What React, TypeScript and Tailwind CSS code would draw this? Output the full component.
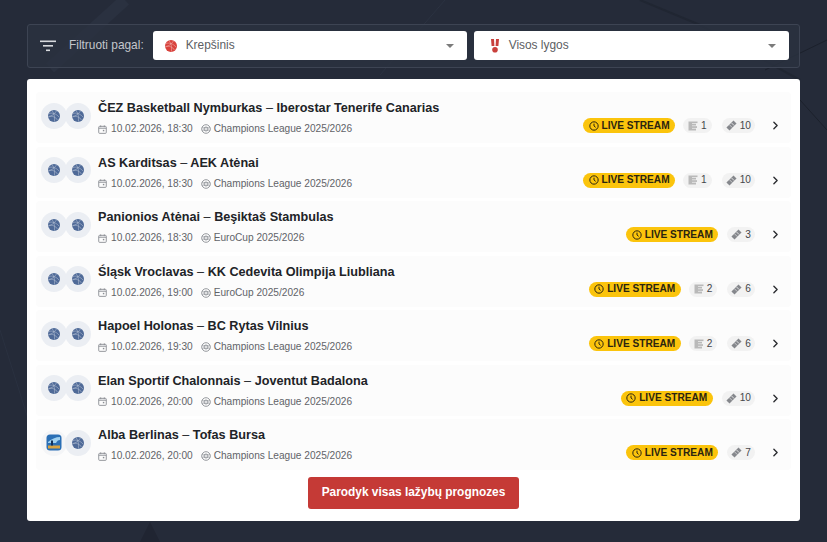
import React from "react";
import { ChevronRight } from "lucide-react";

interface Match {
  home: string;
  away: string;
  time: string;
  league: string;
  tips?: number;
  odds: number;
  alba?: boolean;
}

const matches: Match[] = [
  { home: "ČEZ Basketball Nymburkas", away: "Iberostar Tenerife Canarias", time: "10.02.2026, 18:30", league: "Champions League 2025/2026", tips: 1, odds: 10 },
  { home: "AS Karditsas", away: "AEK Atėnai", time: "10.02.2026, 18:30", league: "Champions League 2025/2026", tips: 1, odds: 10 },
  { home: "Panionios Atėnai", away: "Beşiktaš Stambulas", time: "10.02.2026, 18:30", league: "EuroCup 2025/2026", odds: 3 },
  { home: "Śląsk Vroclavas", away: "KK Cedevita Olimpija Liubliana", time: "10.02.2026, 19:00", league: "EuroCup 2025/2026", tips: 2, odds: 6 },
  { home: "Hapoel Holonas", away: "BC Rytas Vilnius", time: "10.02.2026, 19:30", league: "Champions League 2025/2026", tips: 2, odds: 6 },
  { home: "Elan Sportif Chalonnais", away: "Joventut Badalona", time: "10.02.2026, 20:00", league: "Champions League 2025/2026", odds: 10 },
  { home: "Alba Berlinas", away: "Tofas Bursa", time: "10.02.2026, 20:00", league: "Champions League 2025/2026", odds: 7, alba: true },
];

const Ball = ({ size, color }: { size: number; color: string }) => (
  <svg width={size} height={size} viewBox="0 0 24 24" fill={color}>
    <circle cx="12" cy="12" r="12" />
    <g fill="none" stroke="#fff" strokeWidth="1.2" opacity="0.55">
      <path d="M2 7c6-2 14 0 20 7" />
      <path d="M1 13c7-2 14 1 19 8" />
      <path d="M8 1c4 5 6 12 5 22" />
      <path d="M17 2c-3 5-9 10-16 12" />
    </g>
  </svg>
);

const TeamLogo = ({ alba, overlap }: { alba?: boolean; overlap?: boolean }) => (
  <div className={`w-[26px] h-[26px] rounded-full flex items-center justify-center ${alba ? "bg-[#f4f5f7]" : "bg-[#ebeef3]"} ${overlap ? "-ml-[2px]" : ""}`}>
    {alba ? (
      <svg width="16" height="17" viewBox="0 0 16 17">
        <rect x="0.5" y="0.5" width="15" height="16" rx="3.5" fill="#2a6fb5" />
        <path d="M2 8c3-3 8-5 12-5v3c-2 0-3 1-4 3H2z" fill="#9fd0ef" />
        <rect x="2" y="11.5" width="12" height="3" fill="#d9a441" />
        <rect x="5" y="6.5" width="2" height="5" fill="#12325c" />
      </svg>
    ) : (
      <Ball size={12} color="#4f6a98" />
    )}
  </div>
);

const CalendarIcon = () => (
  <svg width="9" height="9" viewBox="0 0 10 10" fill="none" stroke="#8a8d93" strokeWidth="1">
    <rect x="0.8" y="1.5" width="8.4" height="7.8" rx="1" />
    <path d="M0.8 3.6h8.4M3 .4v2M7 .4v2" />
    <rect x="5.4" y="5.4" width="1.6" height="1.6" fill="#8a8d93" stroke="none" />
  </svg>
);

const LeagueIcon = () => (
  <svg width="10" height="10" viewBox="0 0 10 10" fill="none" stroke="#8a8d93" strokeWidth="0.9">
    <circle cx="5" cy="5" r="4.3" />
    <circle cx="5" cy="5" r="2" />
    <path d="M1 3.5c2 .6 6 .6 8 0M1 6.5c2-.6 6-.6 8 0" strokeWidth="0.6" />
  </svg>
);

const TipsIcon = () => (
  <svg width="10" height="10" viewBox="0 0 10 10" fill="#b9b9b9">
    <rect x="0.5" y="0.5" width="3.5" height="9" />
    <rect x="4" y="0.5" width="5.5" height="1.6" />
    <rect x="4" y="2.8" width="4" height="1.7" />
    <rect x="4" y="5.2" width="5" height="1.7" />
    <rect x="4" y="7.6" width="4" height="1.9" />
  </svg>
);

const TicketIcon = () => (
  <svg width="11" height="11" viewBox="0 0 12 12">
    <path d="M8.2 0.5 11.5 3.8 3.8 11.5 0.5 8.2z" fill="#85878c" />
    <path d="M6 3.2 8.8 6" stroke="#fff" strokeWidth="0.8" />
    <path d="M3.8 5.2 6.8 8.2" stroke="#fff" strokeWidth="0.6" />
  </svg>
);

const ClockIcon = () => (
  <svg width="10" height="10" viewBox="0 0 12 12" fill="none" stroke="#2b2410" strokeWidth="1.2">
    <circle cx="6" cy="6" r="5" />
    <path d="M6 3.2V6l2 1.6" />
  </svg>
);

const Caret = () => <span className="w-0 h-0 border-l-[4.5px] border-r-[4.5px] border-t-[4px] border-l-transparent border-r-transparent border-t-[#7b7b7b]" />;

const MatchRow = ({ match }: { match: Match }) => (
  <div className="h-[51px] flex items-center rounded bg-[#fcfcfc] pl-[5px] pr-[9px]">
    <div className="flex shrink-0 -mt-[4px]">
      <TeamLogo alba={match.alba} />
      <TeamLogo overlap />
    </div>
    <div className="ml-[7px] flex-1 min-w-0 self-start pt-[7px]">
      <div className="text-[12.65px] leading-[18px] font-bold text-[#212327] whitespace-nowrap">
        {match.home} <span className="font-normal">–</span> {match.away}
      </div>
      <div className="mt-[4px] flex items-center text-[10.15px] leading-[16px] text-[#616368]">
        <CalendarIcon />
        <span className="ml-[4px]">{match.time}</span>
        <span className="ml-[8px] flex items-center">
          <LeagueIcon />
        </span>
        <span className="ml-[3px]">{match.league}</span>
      </div>
    </div>
    <div className="flex items-center self-center mt-[16px] shrink-0">
      <div className="h-[15px] px-[5.5px] flex items-center gap-[3px] rounded-full bg-[#fbc40c] text-[10.15px] font-bold text-[#2b2410]">
        <ClockIcon />
        LIVE STREAM
      </div>
      {match.tips !== undefined && (
        <div className="ml-[8px] h-[15px] px-[5px] flex items-center gap-[3px] rounded-full bg-[#f2f2f2] text-[10.15px] text-[#44464a]">
          <TipsIcon />
          {match.tips}
        </div>
      )}
      <div className={`${match.tips !== undefined ? "ml-[10px]" : "ml-[9px]"} h-[15px] px-[4px] flex items-center gap-[3px] rounded-full bg-[#f2f2f2] text-[10.15px] text-[#44464a]`}>
        <TicketIcon />
        {match.odds}
      </div>
      <ChevronRight className="ml-[14px] text-[#2a2c30]" size={13} strokeWidth={2.5} />
    </div>
  </div>
);

export default function App() {
  return (
    <div className="relative w-[827px] h-[542px] overflow-hidden bg-[#252b39] font-['Liberation_Sans',sans-serif]">
      {/* background streaks */}
      <svg className="absolute inset-0" width="827" height="542" fill="none">
        <path d="M50 68 125 0" stroke="#2a3140" strokeWidth="12" />
        <path d="M380 75 445 0" stroke="#2b3241" strokeWidth="1" />
        <path d="M640 0 700 25 800 80" stroke="#202632" strokeWidth="2" />
        <path d="M765 70 827 40" stroke="#1c212c" strokeWidth="1" />
        <path d="M800 100 827 130" stroke="#1c212c" strokeWidth="1" />
        <path d="M0 330 60 520" stroke="#2a3140" strokeWidth="1" />
        <path d="M140 542 150 522 160 542z" fill="#202532" />
      </svg>

      <div className="relative pt-[24px] px-[27px]">
        <div className="h-[44px] flex items-center rounded-[3px] border border-[#3d4453] bg-[#2b3240]/80 pl-[12px] pr-[10px]">
          <svg width="16" height="12" viewBox="0 0 16 12" fill="#d7d9dd">
            <rect x="0" y="0.5" width="16" height="1.6" />
            <rect x="3" y="5" width="10" height="1.6" />
            <rect x="6" y="9.5" width="4" height="1.6" />
          </svg>
          <span className="ml-[13px] text-[11.9px] text-[#c3c6cc] whitespace-nowrap">Filtruoti pagal:</span>
          <div className="ml-[9px] mb-[1px] w-[314px] h-[29px] flex items-center rounded-[3px] bg-white pl-[12px] pr-[13px]">
            <Ball size={12} color="#d9423c" />
            <span className="ml-[9px] flex-1 text-[11.9px] text-[#5c5e63]">Krepšinis</span>
            <Caret />
          </div>
          <div className="ml-[7px] mb-[1px] w-[315px] h-[29px] flex items-center rounded-[3px] bg-white pl-[16px] pr-[13px]">
            <svg width="10" height="14" viewBox="0 0 10 14" fill="#c9403c">
              <path d="M1 0h3l.4 7H1.6zM6 0h3l-.6 7H5.6z" />
              <circle cx="5" cy="10.8" r="2.8" />
            </svg>
            <span className="ml-[9px] flex-1 text-[11.9px] text-[#5c5e63]">Visos lygos</span>
            <Caret />
          </div>
        </div>

        <div className="mt-[11px] h-[442px] rounded-[3px] bg-white pt-[13px] px-[9px]">
          <div className="flex flex-col gap-[3.5px]">
            {matches.map((match) => (
              <MatchRow key={match.home} match={match} />
            ))}
          </div>
          <div className="mt-[7px] flex justify-center">
            <button className="h-[32px] w-[211px] rounded-[3px] bg-[#c53a36] text-[11.9px] font-bold text-white">
              Parodyk visas lažybų prognozes
            </button>
          </div>
        </div>
      </div>
    </div>
  );
}
